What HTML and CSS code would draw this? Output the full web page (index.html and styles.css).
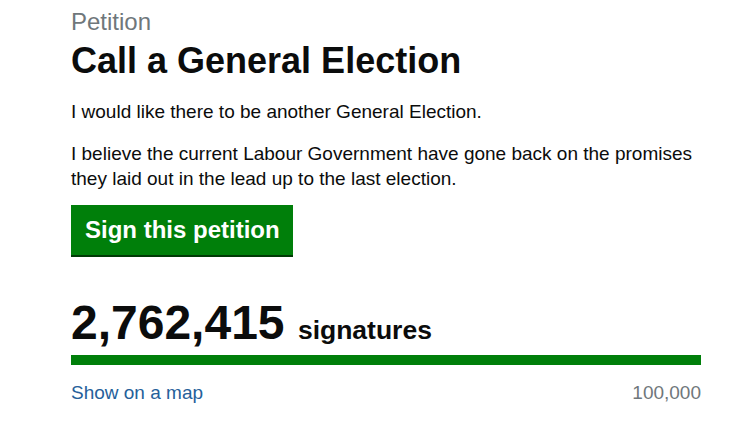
FILE: index.html
```html
<!DOCTYPE html>
<html lang="en">
<head>
  <meta charset="UTF-8">
  <meta name="viewport" content="width=device-width, initial-scale=1.0">
  <title>Call a General Election - Petitions</title>

  <link rel="stylesheet" href="styles.css">

</head>
<body>
  <div class="container">
    <div class="caption">Petition</div>
    <h1 class="title">Call a General Election</h1>

    <p>I would like there to be another General Election.</p>
    <p>I believe the current Labour Government have gone back on the promises they laid out in the lead up to the last election.</p>

    <a href="#" class="btn">Sign this petition</a>

    <div class="count">
      <span class="count-number">2,762,415</span>
      <span class="count-label">signatures</span>
    </div>

    <div class="progress">
      <div class="progress-bar" style="width: 100%"></div>
    </div>

    <div class="meta">
      <a href="#" class="map-link">Show on a map</a>
      <span class="threshold">100,000</span>
    </div>
  </div>
</body>
</html>
```

FILE: styles.css
```css
* {
  margin: 0;
  padding: 0;
}

body {
  font-family: "Liberation Sans", Arial, sans-serif;
  color: #0b0c0c;
  background-color: #fff;
}

.container {
  width: 630px;
  padding: 7px 0 0 71px;
}

.caption {
  font-size: 24px;
  line-height: 30px;
  color: #6f777b;
}

.title {
  font-size: 36px;
  line-height: 40px;
  font-weight: bold;
  margin: 4px 0 18px;
}

p {
  font-size: 19px;
  line-height: 25px;
  margin-bottom: 17px;
}

.btn {
  display: inline-block;
  margin-top: -3px;
  padding: 0 13px 0 14px;
  height: 50px;
  line-height: 50px;
  font-size: 24px;
  font-weight: bold;
  color: #fff;
  text-decoration: none;
  background-color: #007f0a;
  box-shadow: 0 2px 0 #003a05;
}

.count {
  margin-top: 43px;
  font-size: 48px;
  line-height: 50px;
  font-weight: bold;
}

.count-label {
  font-size: 26.5px;
  line-height: 1;
}

.progress {
  margin-top: 7px;
  height: 10px;
}

.progress-bar {
  height: 100%;
  background-color: #007f0a;
}

.meta {
  display: flex;
  justify-content: space-between;
  margin-top: 15px;
  font-size: 19px;
  line-height: 25px;
}

.map-link {
  color: #25609a;
  text-decoration: none;
}

.threshold {
  color: #6f777b;
}
```
